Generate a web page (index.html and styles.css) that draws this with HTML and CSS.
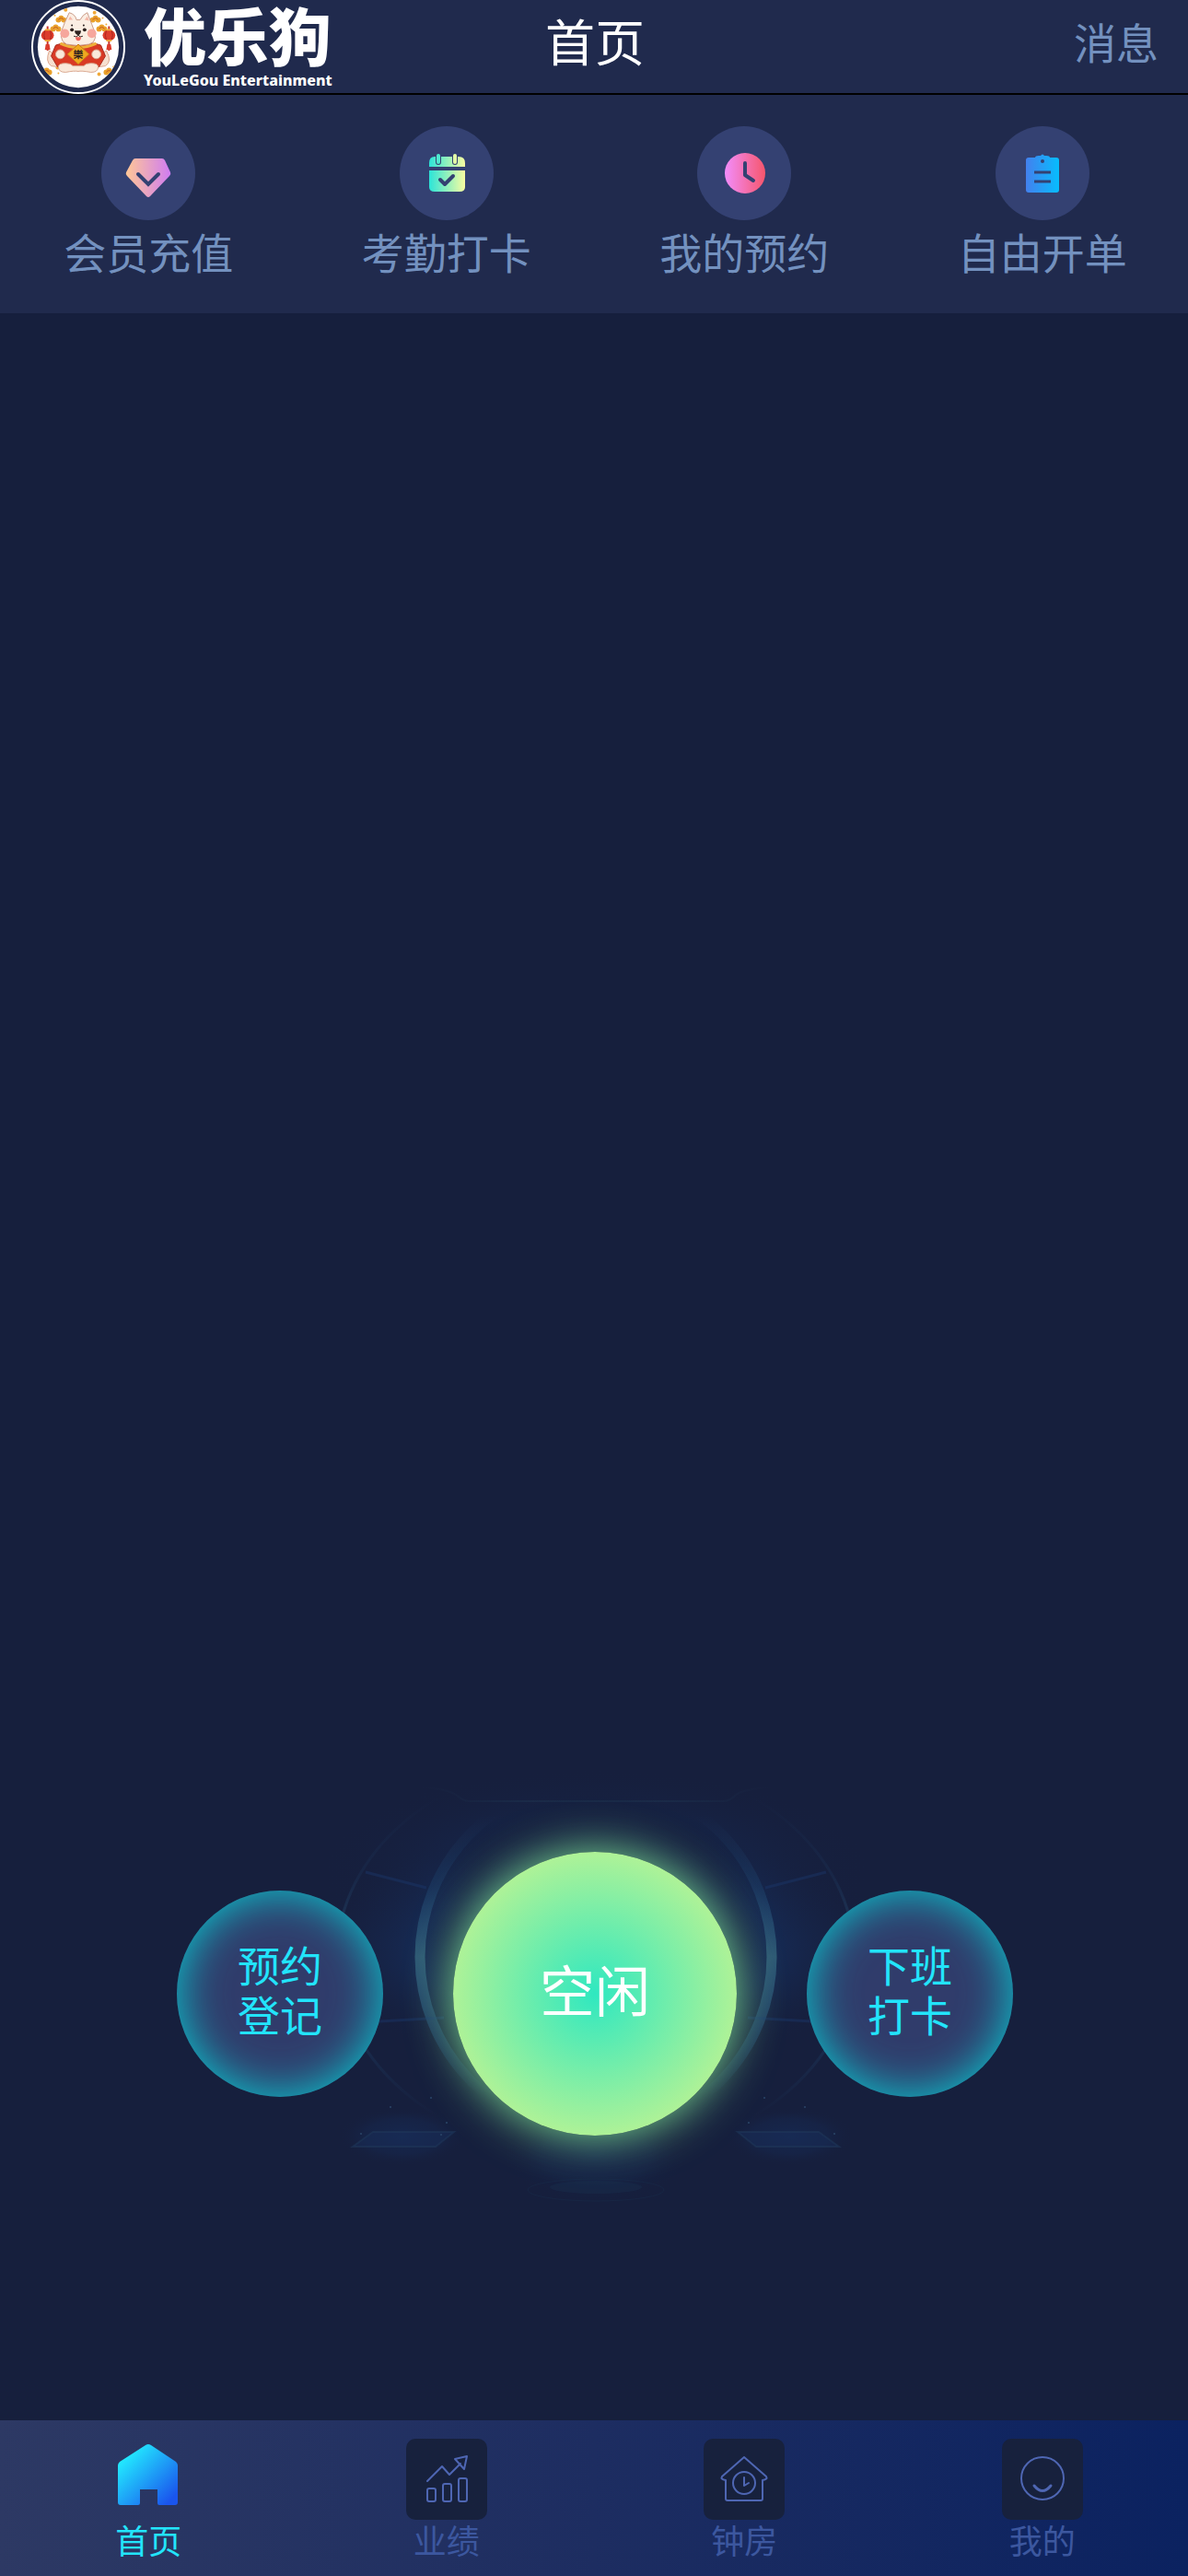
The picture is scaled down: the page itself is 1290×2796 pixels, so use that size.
FILE: index.html
```html
<!DOCTYPE html>
<html lang="zh-CN">
<head>
<meta charset="utf-8">
<meta name="viewport" content="width=device-width, initial-scale=1">
<title>首页</title>
<link rel="stylesheet" href="styles.css">
</head>
<body>
<header class="topbar">
  <div class="brand">
    <svg class="brand-badge" viewBox="0 0 104 104" aria-hidden="true">
      <defs>
        <clipPath id="disc"><circle cx="52" cy="52" r="45"/></clipPath>
        <g id="lantern"><path d="M0-10v4M0 6v11" stroke="#c9342a" stroke-width="2"/><ellipse rx="7" ry="6" fill="#dc3b2c"/><path d="M-3-5Q-5 0-3 5M3-5Q5 0 3 5" stroke="#a9251e" fill="none"/><path d="M-3-6h6M-3 6h6" stroke="#efb03a" stroke-width="2"/><path d="M-2 10h4l1 6h-6z" fill="#dc3b2c"/></g>
        <g id="cloud" fill="#e9a12c"><circle cx="-3" cy="1" r="3"/><circle cy="-1" r="3"/><circle cx="3" cy="1" r="3"/><path d="M-3 1q3-4 6 0" stroke="#c45a22" fill="none"/></g>
      </defs>
      <circle cx="52" cy="52" r="51" fill="none" stroke="#fff" stroke-width="2"/>
      <circle cx="52" cy="52" r="45" fill="#fff"/>
      <g clip-path="url(#disc)">
        <g fill="#f0a93a"><circle cx="26" cy="17" r="1"/><circle cx="38" cy="11" r="2"/><circle cx="70" cy="14" r="2"/><circle cx="79" cy="20" r="1"/><circle cx="83" cy="27" r="1"/><circle cx="29" cy="75" r="2"/><circle cx="75" cy="82" r="2"/><circle cx="30" cy="81" r="1"/><circle cx="91" cy="74" r="1"/></g>
        <use href="#cloud" x="33" y="21"/><use href="#cloud" x="71" y="21"/><use href="#cloud" x="27" y="31"/><use href="#cloud" x="78" y="31"/>
        <use href="#lantern" x="18" y="39"/><use href="#lantern" x="86" y="39"/>
        <use href="#cloud" x="17" y="79"/><use href="#cloud" x="86" y="79"/>
        <path d="M20 56q-5 12 2 17l14 2-7-12zM83 56q7 12-1 17l-14 2 6-12z" fill="#f6dfcf" stroke="#dba58c"/>
        <path d="M27 50q8-3 25-3t25 3l5 12-7 12H29l-7-12z" fill="#d93a25" stroke="#a52a1e"/>
        <path d="M32 48q20 9 40 0" fill="none" stroke="#efb03a" stroke-width="3"/>
        <path d="M30 74q0-4 8-4 6 0 8 3h12q2-3 8-3 8 0 8 4 0 6-8 6-11-2-14-1-4-1-14 1-8 0-8-6z" fill="#fae9da" stroke="#d9a891"/>
        <path d="M37 25l5-11q7 2 8 8h4q3-6 8-8l5 13q9 19-3 22-13 3-25 0-11-5-2-24z" fill="#fbeee3" stroke="#c99a87"/>
        <path d="M41 22l2-4 3 4zM59 22l3-4 2 5z" fill="#f5b7a7"/>
        <circle cx="37" cy="37" r="5" fill="#f6a79c"/><circle cx="67" cy="37" r="5" fill="#f6a79c"/>
        <g fill="#2c211f"><circle cx="45" cy="33" r="2"/><circle cx="59" cy="33" r="2"/><circle cx="45" cy="28" r="1"/><circle cx="58" cy="28" r="1"/><path d="M48 34h7q0 4-3 5-4-1-4-5z"/></g>
        <path d="M47 40q3 2 5-1 2 3 5 1" fill="none" stroke="#2c211f"/><path d="M49 41h6q0 4-3 4t-3-4z" fill="#e9635b"/>
        <circle cx="32" cy="60" r="5" fill="#fae9da" stroke="#d9a891"/><circle cx="72" cy="60" r="5" fill="#fae9da" stroke="#d9a891"/>
        <path d="M52 49l12 11-12 11-12-11z" fill="#f0a81f" stroke="#c97a18"/>
        <text x="52" y="64" class="badge-char">樂</text>
      </g>
    </svg>
    <div class="brand-text">
      <span class="brand-name">优乐狗</span>
      <span class="brand-sub">YouLeGou Entertainment</span>
    </div>
  </div>
  <h1 class="title">首页</h1>
  <a class="messages" href="#messages">消息</a>
</header>

<nav class="shortcuts" aria-label="快捷入口">
  <a class="shortcut" href="#recharge">
    <span class="shortcut-icon"><svg viewBox="0 0 102 102"><defs><linearGradient id="g1"><stop stop-color="#ffc796"/><stop offset="1" stop-color="#cf7cf2"/></linearGradient></defs><path d="M37 35h29q2 0 3 2l6 13q1 2-1 4L53 76q-2 2-4 0L28 54q-2-2-1-4l7-13q1-2 3-2z" fill="url(#g1)"/><path d="M40 52l11 11 11-11" fill="none" stroke="#344172" stroke-width="4" stroke-linecap="round"/></svg></span>
    <span>会员充值</span>
  </a>
  <a class="shortcut" href="#attendance">
    <span class="shortcut-icon"><svg viewBox="0 0 102 102"><defs><linearGradient id="g2"><stop stop-color="#2ce4d8"/><stop offset="1" stop-color="#f8fda1"/></linearGradient></defs><path d="M38 33h26q7 0 7 7v4H32v-4q0-7 6-7zM32 48h39v18q0 5-6 5H38q-6 0-6-5z" fill="url(#g2)"/><path d="M42 33v6M60 33v6" stroke="#344172" stroke-width="6" stroke-linecap="round"/><path d="M42 32v7" stroke="#4ee9cf" stroke-width="4" stroke-linecap="round"/><path d="M60 32v7" stroke="#e3f9a7" stroke-width="4" stroke-linecap="round"/><path d="M44 58l5 5 9-9" fill="none" stroke="#344172" stroke-width="4" stroke-linecap="round" stroke-linejoin="round"/></svg></span>
    <span>考勤打卡</span>
  </a>
  <a class="shortcut" href="#bookings">
    <span class="shortcut-icon"><svg viewBox="0 0 102 102"><defs><linearGradient id="g3"><stop stop-color="#f28dfb"/><stop offset="1" stop-color="#f6566c"/></linearGradient></defs><circle cx="52" cy="51" r="22" fill="url(#g3)"/><path d="M52 40v13l9 6" fill="none" stroke="#344172" stroke-width="4" stroke-linecap="round" stroke-linejoin="round"/></svg></span>
    <span>我的预约</span>
  </a>
  <a class="shortcut" href="#order">
    <span class="shortcut-icon"><svg viewBox="0 0 102 102"><defs><linearGradient id="g4"><stop stop-color="#4380ee"/><stop offset="1" stop-color="#06bdfe"/></linearGradient></defs><path d="M36 34h7q0-2 4-2h2q2-3 4 0h2q4 0 4 2h7q3 0 3 3v32q0 3-3 3H36q-3 0-3-3V37q0-3 3-3z" fill="url(#g4)"/><circle cx="51" cy="38" r="2" fill="#344172"/><path d="M42 50h18M42 60h18" stroke="#344172" stroke-width="3"/></svg></span>
    <span>自由开单</span>
  </a>
</nav>

<main class="stage">
  <div class="console">
    <svg class="scenery" viewBox="0 0 660 500" aria-hidden="true">
      <defs>
        <radialGradient id="haze"><stop stop-color="#163a74" stop-opacity=".8"/><stop offset=".6" stop-color="#163468" stop-opacity=".5"/><stop offset="1" stop-color="#161f3d" stop-opacity="0"/></radialGradient>
        <radialGradient id="well"><stop offset=".85" stop-color="#161f3d" stop-opacity=".6"/><stop offset="1" stop-color="#161f3d" stop-opacity="0"/></radialGradient>
        <linearGradient id="ring" x2="0" y2="1"><stop offset=".1" stop-color="#24507c" stop-opacity="0"/><stop offset=".3" stop-color="#24507c" stop-opacity=".3"/><stop offset=".5" stop-color="#2e5874"/><stop offset=".75" stop-color="#24507c" stop-opacity=".4"/><stop offset=".9" stop-color="#24507c" stop-opacity="0"/></linearGradient>
        <linearGradient id="roof"><stop stop-color="#24405a" stop-opacity="0"/><stop offset=".5" stop-color="#24405a" stop-opacity=".5"/><stop offset="1" stop-color="#24405a" stop-opacity="0"/></linearGradient>
      </defs>
      <ellipse cx="330" cy="205" rx="325" ry="130" fill="url(#haze)"/>
      <ellipse cx="330" cy="120" rx="300" ry="110" fill="url(#haze)" opacity=".3"/>
      <path d="M140 30q30 2 38 8 8 7 14 7h276q8 0 14-7 8-6 38-8" fill="none" stroke="url(#roof)" stroke-width="2"/>
      <ellipse cx="330" cy="214" rx="281" ry="218" fill="none" stroke="url(#ring)" stroke-width="3" opacity=".5"/>
      <circle cx="330" cy="214" r="186" fill="url(#well)"/>
      <circle cx="330" cy="214" r="191" fill="none" stroke="url(#ring)" stroke-width="11"/>
      <path d="M80 122l66 17M580 122l-66 17M95 284l70-4M565 284l-70-4" stroke="#1b3a70" stroke-width="3" opacity=".4"/>
      <ellipse cx="120" cy="409" rx="70" ry="32" fill="url(#haze)" opacity=".4"/>
      <ellipse cx="540" cy="409" rx="70" ry="32" fill="url(#haze)" opacity=".4"/>
      <path d="M88 404h88l-20 16H66zM484 404h88l22 16h-90z" fill="#18305c" fill-opacity=".4" stroke="#1f3a5c" stroke-opacity=".5" stroke-width="2"/>
      <g fill="#2b4668"><circle cx="151" cy="367" r="1"/><circle cx="107" cy="377" r="1"/><circle cx="168" cy="394" r="1"/><circle cx="75" cy="406" r="1"/><circle cx="162" cy="407" r="1"/><circle cx="513" cy="367" r="1"/><circle cx="557" cy="377" r="1"/><circle cx="496" cy="394" r="1"/><circle cx="589" cy="406" r="1"/></g>
      <ellipse cx="330" cy="430" rx="100" ry="50" fill="url(#haze)" opacity=".3"/>
      <ellipse cx="330" cy="464" rx="50" ry="7" fill="#19304e" opacity=".4"/><ellipse cx="330" cy="467" rx="74" ry="12" fill="none" stroke="#19304e" opacity=".4"/>
    </svg>
    <button class="orb" type="button">预约<br>登记</button>
    <button class="orb orb-main" type="button">空闲</button>
    <button class="orb" type="button">下班<br>打卡</button>
  </div>
</main>

<nav class="tabs" aria-label="主导航">
  <a class="tab tab-active" href="#home">
    <svg viewBox="0 0 88 88"><defs><linearGradient id="g5" x2="1" y2="1"><stop offset=".15" stop-color="#22ecff"/><stop offset=".9" stop-color="#1a55ee"/></linearGradient></defs><path d="M41 7q3-2 6 0l27 18q2 2 2 4v40q0 3-3 3H56q-2 0-2-2V55H35v15q0 2-2 2H14q-3 0-3-3V29q0-2 2-4z" fill="url(#g5)"/></svg>
    <span>首页</span>
  </a>
  <a class="tab" href="#performance">
    <svg class="tab-box" viewBox="0 0 88 88"><g fill="none" stroke="#4e66b3" stroke-width="2" stroke-linejoin="round" stroke-linecap="round"><rect x="23" y="54" width="9" height="14" rx="2"/><rect x="40" y="49" width="9" height="19" rx="2"/><rect x="57" y="43" width="9" height="25" rx="2"/><path d="M23 46l16-16 8 9 12-12M53 22l13-3-3 14z"/></g></svg>
    <span>业绩</span>
  </a>
  <a class="tab" href="#rooms">
    <svg class="tab-box" viewBox="0 0 88 88"><g fill="none" stroke="#4e66b3" stroke-width="2" stroke-linejoin="round" stroke-linecap="round"><path d="M44 20L20 41q-2 3 4 4v20q0 2 2 2h36q2 0 2-2V45q6-1 4-4z"/><circle cx="44" cy="48" r="12"/><path d="M44 42v9l5-3"/></g></svg>
    <span>钟房</span>
  </a>
  <a class="tab" href="#me">
    <svg class="tab-box" viewBox="0 0 88 88"><g fill="none" stroke="#4e66b3" stroke-linecap="round"><circle cx="44" cy="43" r="23" stroke-width="2"/><path d="M35 51q9 11 18 0" stroke-width="3"/></g></svg>
    <span>我的</span>
  </a>
</nav>
</body>
</html>
```
FILE: styles.css
```css
* { box-sizing: border-box; }

body {
  margin: 0;
  min-height: 100vh;
  display: flex;
  flex-direction: column;
  background: #161f3d;
  color: #7391bf;
  font-family: "Noto Sans CJK SC", sans-serif;
  font-size: 46px;
  line-height: 54px;
}

a { color: inherit; text-decoration: none; }

.topbar {
  display: grid;
  grid-template-columns: 1fr auto 1fr;
  align-items: start;
  height: 103px;
  padding: 0 32px 0 34px;
  background: #202a4d;
  border-bottom: 2px solid #000;
}

.brand { display: flex; gap: 20px; }
.brand-badge { width: 102px; height: 102px; flex: none; }
.badge-char { font-size: 11px; font-weight: 700; text-anchor: middle; fill: #2c211f; }
.brand-text { display: flex; flex-direction: column; color: #fff; white-space: nowrap; }
.brand-name { font-size: 68px; font-weight: 900; line-height: 74px; }
.brand-sub { font-family: "Noto Sans", sans-serif; font-size: 16px; font-weight: 800; line-height: 26px; }

.title,
.messages { line-height: 88px; }
.title { margin: 0; color: #fff; font-size: 54px; font-weight: 400; }
.messages { justify-self: end; }

.shortcuts,
.tabs {
  display: grid;
  grid-template-columns: repeat(4, 25%);
  column-gap: 1px;
  overflow: hidden;
}

.shortcuts {
  height: 237px;
  padding-top: 34px;
  background: #202a4d;
}

.shortcut { display: flex; flex-direction: column; align-items: center; gap: 6px; }
.shortcut-icon { width: 102px; height: 102px; border-radius: 50%; background: #344172; }
.shortcut-icon svg { display: block; }

.stage {
  flex: 1;
  display: flex;
  flex-direction: column;
  justify-content: flex-end;
  align-items: center;
  padding-bottom: 309px;
}

.console {
  position: relative;
  display: flex;
  align-items: center;
  justify-content: center;
  gap: 76px;
  padding-left: 2px;
}

.scenery {
  position: absolute;
  left: 50%;
  top: -100px;
  width: 660px;
  margin-left: -328px;
}

.orb {
  position: relative;
  width: 224px;
  height: 224px;
  padding: 0 0 12px;
  border: 0;
  border-radius: 50%;
  background: #303c6b;
  box-shadow: inset 0 0 50px #08ced4;
  color: #22e4fb;
  font: inherit;
}

.orb-main {
  width: 308px;
  height: 308px;
  background: radial-gradient(closest-side, #2fe8c0, #aef297);
  box-shadow: 0 0 50px #7ddf93;
  color: #fff;
  font-size: 60px;
}

.tabs {
  height: 169px;
  padding-top: 20px;
  background: linear-gradient(90deg, #2d3964, #1d2d61 50%, #0b2260);
  color: #3c579f;
  font-size: 36px;
  line-height: 42px;
}

.tab { display: flex; flex-direction: column; align-items: center; }
.tab svg { width: 88px; height: 88px; }
.tab-box { border-radius: 10px; background: #17213d; }
.tab-active { color: #22e4fb; }
```
